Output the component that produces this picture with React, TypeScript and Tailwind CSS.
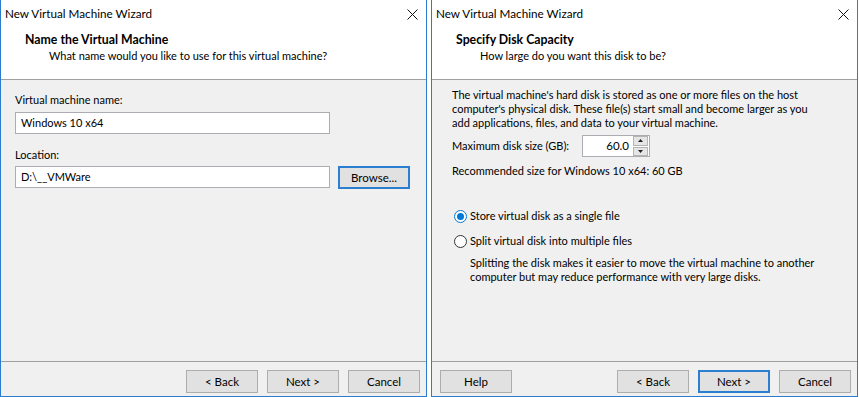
import React from "react";

const font = { fontFamily: 'Lato, "Segoe UI", sans-serif' };

function CloseIcon() {
  return (
    <svg width="11" height="11" viewBox="0 0 11 11" className="block">
      <path d="M0.5 0.5 L10.5 10.5 M10.5 0.5 L0.5 10.5" stroke="#111" strokeWidth="1" fill="none" />
    </svg>
  );
}

function Btn({ label, focused = false }: { label: string; focused?: boolean }) {
  return (
    <div
      className={`w-[72px] h-[23px] flex items-center justify-center bg-[#e1e1e1] text-[11.5px] text-black ${
        focused ? "border-2 border-[#2b7fd0]" : "border border-[#adadad]"
      }`}
    >
      {label}
    </div>
  );
}

function Window({
  title,
  subtitle,
  children,
  footer,
}: {
  title: string;
  subtitle: string;
  children: React.ReactNode;
  footer: React.ReactNode;
}) {
  return (
    <div className="w-[427px] h-[397px] flex flex-col border-x border-b border-[#2b7ccc] bg-white">
      <div className="h-[28px] flex items-center justify-between pl-[4px] pr-[8px] text-[11.7px] text-black">
        <span>New Virtual Machine Wizard</span>
        <CloseIcon />
      </div>
      <div className="h-[52px] pt-[4px] border-b border-[#a0a0a0] whitespace-nowrap">
        <div className="pl-[24px] leading-4 text-[12.3px] font-bold text-black">{title}</div>
        <div className="pl-[48px] leading-4 text-[11px] text-black">{subtitle}</div>
      </div>
      <div className="flex-1 bg-[#f0f0f0] border-b border-[#a0a0a0] whitespace-nowrap">{children}</div>
      <div className="h-[34px] bg-[#f0f0f0] flex items-start pt-[8px] px-[6px]">{footer}</div>
    </div>
  );
}

function Radio({ checked, label }: { checked?: boolean; label: string }) {
  return (
    <div className="flex items-center h-4 leading-4">
      <span
        className={`w-[13px] h-[13px] rounded-full border flex items-center justify-center bg-white ${
          checked ? "border-[#0078d7]" : "border-[#333]"
        }`}
      >
        {checked && <span className="w-[7px] h-[7px] rounded-full bg-[#0078d7]" />}
      </span>
      <span className="ml-[3px]">{label}</span>
    </div>
  );
}

export default function App() {
  return (
    <div className="w-[859px] h-[397px] flex gap-[4px] bg-white text-[11px] text-black" style={font}>
      <Window
        title="Name the Virtual Machine"
        subtitle="What name would you like to use for this virtual machine?"
        footer={
          <div className="flex-1 flex justify-end gap-[9px]">
            <Btn label="< Back" />
            <Btn label="Next >" />
            <Btn label="Cancel" />
          </div>
        }
      >
        <div className="pl-[14px] pt-[12px] pr-[15px]">
          <div className="leading-4">Virtual machine name:</div>
          <div className="mt-[4px] w-[315px] h-[22px] bg-white border border-[#abadb3] flex items-center pl-[5px]">
            Windows 10 x64
          </div>
          <div className="mt-[13px] leading-4">Location:</div>
          <div className="mt-[3px] flex gap-[8px]">
            <div className="w-[315px] h-[22px] bg-white border border-[#abadb3] flex items-center pl-[5px]">
              D:\__VMWare
            </div>
            <Btn label="Browse..." focused />
          </div>
        </div>
      </Window>

      <Window
        title="Specify Disk Capacity"
        subtitle="How large do you want this disk to be?"
        footer={
          <div className="flex-1 flex items-start pl-[2px]">
            <Btn label="Help" />
            <div className="flex-1" />
            <div className="flex gap-[9px]">
              <Btn label="< Back" />
              <Btn label="Next >" focused />
              <Btn label="Cancel" />
            </div>
          </div>
        }
      >
        <div className="pl-[20px] pt-[8px] pr-[10px]">
          <p className="leading-[14px]">
            The virtual machine's hard disk is stored as one or more files on the host
            <br />
            computer's physical disk. These file(s) start small and become larger as you
            <br />
            add applications, files, and data to your virtual machine.
          </p>
          <div className="mt-[5px] flex items-center">
            <span className="w-[130px]">Maximum disk size (GB):</span>
            <div className="w-[68px] h-[22px] bg-white border border-[#abadb3] flex items-center">
              <span className="flex-1 text-right pr-[4px] text-[11.5px]">60.0</span>
              <div className="w-[15px] h-[20px] flex flex-col mr-[1px] gap-[1px]">
                <div className="flex-1 bg-[#e5e5e5] border border-[#b5b5b5] flex items-center justify-center">
                  <svg width="5" height="3" viewBox="0 0 5 3">
                    <path d="M0 3 L2.5 0 L5 3 Z" fill="#222" />
                  </svg>
                </div>
                <div className="flex-1 bg-[#e5e5e5] border border-[#b5b5b5] flex items-center justify-center">
                  <svg width="5" height="3" viewBox="0 0 5 3">
                    <path d="M0 0 L2.5 3 L5 0 Z" fill="#222" />
                  </svg>
                </div>
              </div>
            </div>
          </div>
          <div className="mt-[6px] leading-4">Recommended size for Windows 10 x64: 60 GB</div>
          <div className="mt-[29px] pl-[2px]">
            <Radio checked label="Store virtual disk as a single file" />
          </div>
          <div className="mt-[9px] pl-[2px]">
            <Radio label="Split virtual disk into multiple files" />
          </div>
          <p className="mt-[7px] pl-[18px] leading-[14px]">
            Splitting the disk makes it easier to move the virtual machine to another
            <br />
            computer but may reduce performance with very large disks.
          </p>
        </div>
      </Window>
    </div>
  );
}
